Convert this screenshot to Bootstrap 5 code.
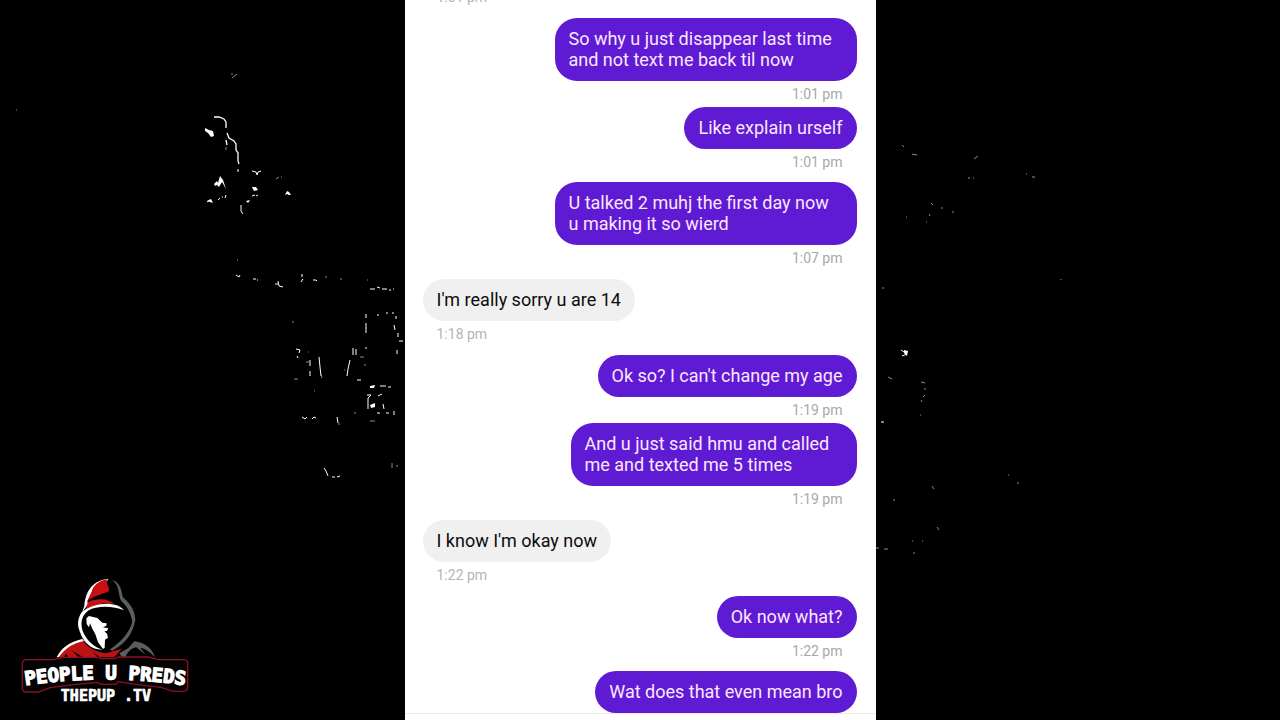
<!DOCTYPE html>
<html lang="en">
<head>
<meta charset="utf-8">
<meta name="viewport" content="width=device-width, initial-scale=1">
<title>Chat</title>
<link href="https://cdn.jsdelivr.net/npm/bootstrap@5.3.0/dist/css/bootstrap.min.css" rel="stylesheet">
<style>
  body { background: #000; font-family: Roboto, "Liberation Sans", sans-serif; }
  .phone { width: 100%; max-width: 471px; background: #fff; }
  .thread { padding: 0 19px 0 18px; }
  .bubble { font-size: 18px; line-height: 21px; padding: 10px 14px 11px; border-radius: 22px; max-width: 302px; }
  .bubble-snug { max-width: 286px; }
  .sent .bubble { background: #5f1ad3; color: #fde6ff; }
  .received .bubble { background: #f0f0f0; color: #0c0c0c; }
  .stamp { font-size: 14px; line-height: 26px; padding: 0 14px; color: #a8a8a8; }
  .received .stamp { color: #b4b4b4; }
  .next { margin-top: 7px; }
  .reply { margin-top: 8px; }
  .composer { height: 7px; border-top: 1px solid #e9e9e9; }
  .brand-mark { width: 210px; height: 160px; }
  .brand-name { font: 700 57px "DejaVu Sans Mono", monospace; }
  .brand-site { font: 700 45px "DejaVu Sans Mono", monospace; }
</style>
</head>
<body class="vh-100 overflow-hidden position-relative d-flex justify-content-center">
<svg class="position-absolute top-0 start-0 w-100 h-100" viewBox="0 0 1280 720" preserveAspectRatio="xMidYMid slice" fill="none" stroke="#fff" aria-hidden="true">
  <!-- bright scratches -->
  <path stroke-width="1.3" d="M214 117l5 0 5 2 2 3 0 6M227 133l2 5 5 3 2 3 0 6 2 3 0 8 1 3M226 140l1 5"/>
  <path fill="#fff" stroke="none" d="M205 128l4 2 4 1 1 5-3 1-3-4-3-2zM214 184l3-3 1 2 2-7 3 4 3 9-4-7-3 5-2-2-2 1zM252 187l4 0 2 3-4 1zM285 195l2-4 2 1 2 3-2 0-2-1zM207 201l4-2 2 4-3-1zM246 201l4-1-2 3zM370 386l5-1-1 3-4 0zM370 405l5-2 0 4-4 1zM904 350l4 1-1 5-3-3z"/>
  <path stroke-width="1" d="M252 171l4 1 1 3 1-3 3-1M218 200l2-2M222 197h1M225 198l1-3M252 196l3-1M256 196l2-1M241 205v6l2 3M238 169v3M207 202l3-2M236 275l3 2 1-2M253 279h3M257 280h1M275 284h3M278 281l1 5 4 1M302 274v3M303 279l-2 3M313 280l3 0 1 1M370 289h5M377 287l3 1M382 289l5 0M389 290h2M393 289h1M366 314v4M366 323v10M366 347v2M378 314v2M386 313h2M392 313h2M396 316v3M394 325l1 5M398 333v4M399 341h4M397 350v4M296 349l4 1-1 3M297 356l1 2M310 360v6M310 371v5M319 357l1 10 1 9M353 348v7M356 349v6M350 360l-2 9-1 7M357 380h4M302 417l3 2 2-2M312 419l2-2 2 1M337 417l1 6M380 386h6M388 387h3M367 395l4 0-3 3v11M378 396l4-2M383 404l1 5M377 413h3M386 413h3M394 411v4M324 468l2 3 2 5M332 477h3M337 477l3-1M901 350l3 2M902 356l5-2M881 422h3"/>
  <!-- faint dust -->
  <path stroke="#8c8c8c" d="M232 78l5-4M231 74h2M16 110h1M276 179l3-2M281 177h1M226 147v3M237 260h1M326 276v2M341 278v2M367 280h1M292 322h2M306 362h3M344 370h1M294 379h4M314 391h1M321 374l1 4M354 413h2M338 424h2M370 421h5M392 463v5M396 466h2M308 352h1M360 357h4M364 365h2M888 377l4 2M921 382l4 1M924 389h2M923 397l2-2M921 400l1 2M920 415h1M902 145l2 2M912 154l5 1M974 159l4-3M968 178h2M973 178h1M1032 177h3M1026 174h1M931 203l2 2M929 214l1 2M941 208h2M926 222h1M906 217h1M952 212h2M882 288h2M1061 279v1M932 486l2 3M893 500h2M937 527l2 3M912 541h1M922 541h1M876 548h3M884 549h4M914 552v2M1008 475h1M1018 482v2"/>
</svg>

<svg class="brand-mark position-absolute bottom-0 start-0" viewBox="0 0 630 480" role="img" aria-label="People U Preds">
  <!-- hood -->
  <path fill="#fff" d="M253 138C256 92 280 60 326 57L318 66C292 70 280 86 274 100L262 124L264 132L246 158Z"/>
  <path fill="#c90f12" d="M274 98C280 74 298 62 321 58C316 72 332 84 326 94C306 104 284 106 262 124Z"/>
  <path fill="#c90f12" d="M264 126C290 114 322 114 345 132C312 126 280 134 256 152Z"/>
  <path fill="#fff" d="M244 158C280 126 350 122 372 151C340 138 292 136 264 152C238 172 240 206 258 232C270 250 288 264 307 269C276 270 250 249 240 216C230 194 234 174 244 158Z"/>
  <path fill="#5d5d5d" d="M336 60C360 66 365 92 368 111C390 130 405 150 406 180C398 220 380 249 337 272L329 269C362 246 388 219 397 185C392 157 380 138 362 121C354 96 358 76 336 60Z"/>
  <!-- face -->
  <path fill="#fff" d="M259 175L267 168L292 174L307 188L320 190L319 197L309 202L325 205L321 213L313 214L321 221L324 233L315 239L314 263L309 267L294 247L286 223L277 206L270 190L267 202L260 192Z"/>
  <!-- shoulders -->
  <path fill="#bd1114" d="M172 291C190 266 216 247 249 242C264 263 289 276 318 280L366 266L343 292H300L278 275L292 292H250L216 272L236 292H205L199 281L191 292Z"/>
  <path fill="#fff" d="M170 292C184 263 209 246 247 237L252 243C219 249 195 266 177 291Z"/>
  <path fill="#5d5d5d" d="M358 280L384 265L403 244C436 247 459 269 465 292C448 274 432 264 421 264L438 286L409 262C391 266 384 276 376 291L366 292Z"/>
  <!-- name plate -->
  <path fill="#050203" stroke="#8d1027" stroke-width="4" d="M78 299H160L190 292H295L303 296H345L354 291H446L475 299H553Q564 300 563 311V381Q563 393 551 394H519L483 382L406 373L354 365L347 373H303L292 367L222 374L150 383L116 396H80Q67 396 67 383V312Q67 300 78 299Z"/>
  <path id="arch" fill="none" d="M50 380Q316 336 582 380"/>
  <text class="brand-name" fill="#fff" stroke="#fff" stroke-width="4" text-anchor="middle"><textPath href="#arch" startOffset="50%">PEOPLE U PREDS</textPath></text>
  <text class="brand-site" x="318" y="424" fill="#fff" stroke="#fff" stroke-width="2" text-anchor="middle">THEPUP .TV</text>
</svg>

<main class="phone vh-100 position-relative d-flex flex-column overflow-hidden">
  <ol class="thread list-unstyled mb-0 flex-grow-1 d-flex flex-column justify-content-end overflow-hidden">
    <li class="received d-flex flex-column align-items-start"><time class="stamp">1:01 pm</time></li>
    <li class="sent reply d-flex flex-column align-items-end"><div class="bubble">So why u just disappear last time and not text me back til now</div><time class="stamp">1:01 pm</time></li>
    <li class="sent d-flex flex-column align-items-end"><div class="bubble">Like explain urself</div><time class="stamp">1:01 pm</time></li>
    <li class="sent next d-flex flex-column align-items-end"><div class="bubble">U talked 2 muhj the first day now u making it so wierd</div><time class="stamp">1:07 pm</time></li>
    <li class="received reply d-flex flex-column align-items-start"><div class="bubble">I'm really sorry u are 14</div><time class="stamp">1:18 pm</time></li>
    <li class="sent reply d-flex flex-column align-items-end"><div class="bubble">Ok so? I can't change my age</div><time class="stamp">1:19 pm</time></li>
    <li class="sent d-flex flex-column align-items-end"><div class="bubble bubble-snug">And u just said hmu and called me and texted me 5 times</div><time class="stamp">1:19 pm</time></li>
    <li class="received reply d-flex flex-column align-items-start"><div class="bubble">I know I'm okay now</div><time class="stamp">1:22 pm</time></li>
    <li class="sent reply d-flex flex-column align-items-end"><div class="bubble">Ok now what?</div><time class="stamp">1:22 pm</time></li>
    <li class="sent next d-flex flex-column align-items-end"><div class="bubble">Wat does that even mean bro</div></li>
  </ol>
  <footer class="composer flex-shrink-0"></footer>
</main>
<script src="https://cdn.jsdelivr.net/npm/bootstrap@5.3.0/dist/js/bootstrap.bundle.min.js"></script>
</body>
</html>
